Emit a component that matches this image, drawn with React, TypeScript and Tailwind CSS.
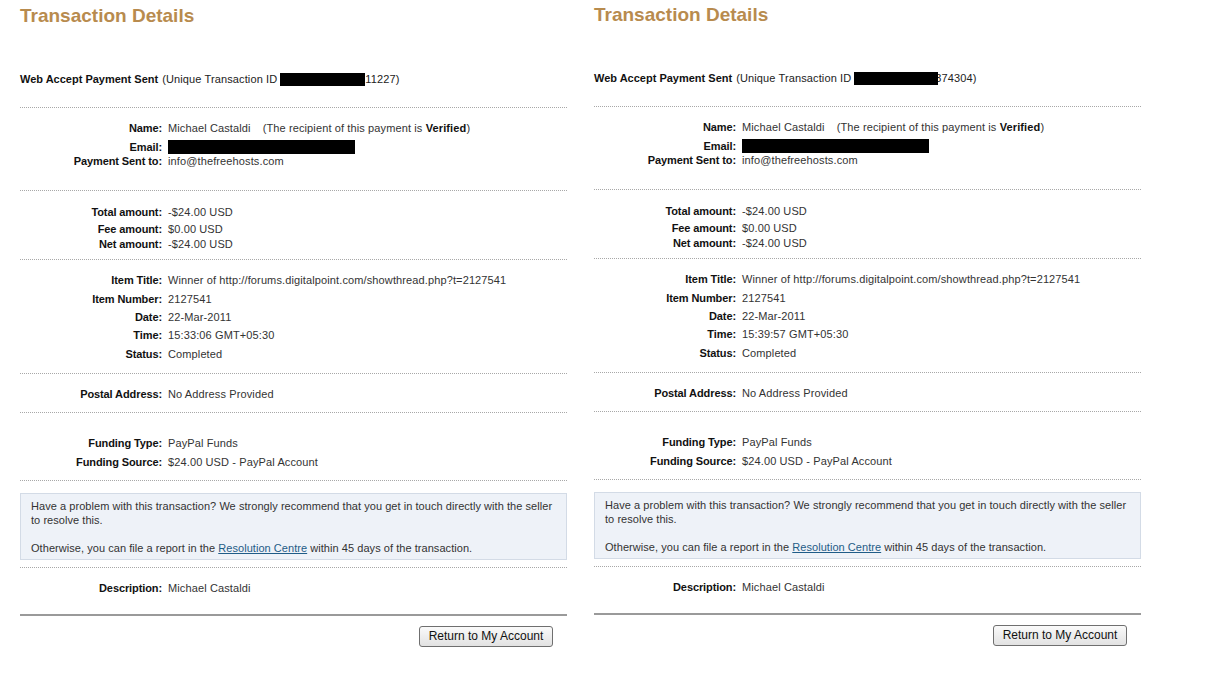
import React from "react";

type RowProps = { label: string; mt: string; children: React.ReactNode };

function Row({ label, mt, children }: RowProps) {
  return (
    <div className={`flex leading-[14px] ${mt}`}>
      <div className="w-[142px] shrink-0 text-right font-bold text-[#111] tracking-[-0.1px]">{label}</div>
      <div className="pl-[6px] text-[#333] tracking-[0.12px]">{children}</div>
    </div>
  );
}

type PanelProps = {
  pt: string;
  idEnd: string;
  idBoxW: string;
  overlap: boolean;
  time: string;
};

function Panel({ pt, idEnd, idBoxW, overlap, time }: PanelProps) {
  return (
    <div className={`w-[547px] shrink-0 ${pt}`}>
      <h1 className="text-[19px] leading-[22px] font-bold text-[#b88b4e]">Transaction Details</h1>
      <div className="mt-[45px] flex items-center leading-[14px] text-[#222] tracking-[0.12px]">
        <span className="font-bold text-[#111] tracking-normal">Web Accept Payment Sent</span>
        <span className="ml-[4px]">(Unique Transaction ID</span>
        <span className={`ml-[3px] inline-block h-[13px] ${idBoxW} bg-black relative z-10`}></span>
        <span className={overlap ? "-ml-[3px]" : ""}>{idEnd}</span>
      </div>

      <div className="mt-[21px] border-t border-dotted border-[#a8a8a8] pb-[22px]">
        <Row label="Name:" mt="mt-[13px]">
          Michael Castaldi
          <span className="ml-[12px]">
            (The recipient of this payment is <b className="text-[#111]">Verified</b>)
          </span>
        </Row>
        <Row label="Email:" mt="mt-[5px]">
          <span className="inline-block h-[14px] w-[187px] bg-black align-top"></span>
        </Row>
        <Row label="Payment Sent to:" mt="mt-0">info@thefreehosts.com</Row>
      </div>

      <div className="border-t border-dotted border-[#a8a8a8] pb-[8px]">
        <Row label="Total amount:" mt="mt-[14px]">-$24.00 USD</Row>
        <Row label="Fee amount:" mt="mt-[3px]">$0.00 USD</Row>
        <Row label="Net amount:" mt="mt-[1px]">-$24.00 USD</Row>
      </div>

      <div className="border-t border-dotted border-[#a8a8a8] pb-[12px]">
        <Row label="Item Title:" mt="mt-[13px]">
          Winner of http://forums.digitalpoint.com/showthread.php?t=2127541
        </Row>
        <Row label="Item Number:" mt="mt-[5px]">2127541</Row>
        <Row label="Date:" mt="mt-[4px]">22-Mar-2011</Row>
        <Row label="Time:" mt="mt-[4px]">{time}</Row>
        <Row label="Status:" mt="mt-[5px]">Completed</Row>
      </div>

      <div className="border-t border-dotted border-[#a8a8a8] pb-[11px]">
        <Row label="Postal Address:" mt="mt-[13px]">No Address Provided</Row>
      </div>

      <div className="border-t border-dotted border-[#a8a8a8] pb-[11px]">
        <Row label="Funding Type:" mt="mt-[23px]">PayPal Funds</Row>
        <Row label="Funding Source:" mt="mt-[5px]">$24.00 USD - PayPal Account</Row>
      </div>

      <div className="border-t border-dotted border-[#a8a8a8] pt-[12px] pb-[7px]">
        <div className="border border-[#d3dbe6] bg-[#eef2f8] pl-[10px] pr-[3px] pt-[5px] pb-[4px] leading-[14px] text-[#333] tracking-[0.05px]">
          <p>
            Have a problem with this transaction? We strongly recommend that you get in touch directly with the seller
            to resolve this.
          </p>
          <p className="mt-[14px]">
            Otherwise, you can file a report in the{" "}
            <span className="text-[#1f5c87] underline">Resolution Centre</span> within 45 days of the transaction.
          </p>
        </div>
      </div>

      <div className="border-t border-dotted border-[#a8a8a8] pb-[19px]">
        <Row label="Description:" mt="mt-[13px]">Michael Castaldi</Row>
      </div>

      <div className="border-t-2 border-[#9a9a9a] flex justify-end pr-[14px] pt-[10px]">
        <button className="h-[21px] w-[134px] rounded-[3px] border border-[#6f6f6f] bg-gradient-to-b from-[#fafafa] to-[#e2e2e2] text-[12px] leading-[19px] text-[#111]">
          Return to My Account
        </button>
      </div>
    </div>
  );
}

export default function App() {
  return (
    <div
      className="min-h-[676px] w-[1207px] bg-white text-[11px]"
      style={{ fontFamily: '"Liberation Sans", Arial, sans-serif' }}
    >
      <div className="flex gap-[27px] pl-[20px]">
        <Panel pt="pt-[5px]" idEnd="11227)" idBoxW="w-[85px]" overlap={false} time="15:33:06 GMT+05:30" />
        <Panel pt="pt-[4px]" idEnd="374304)" idBoxW="w-[84px]" overlap={true} time="15:39:57 GMT+05:30" />
      </div>
    </div>
  );
}
